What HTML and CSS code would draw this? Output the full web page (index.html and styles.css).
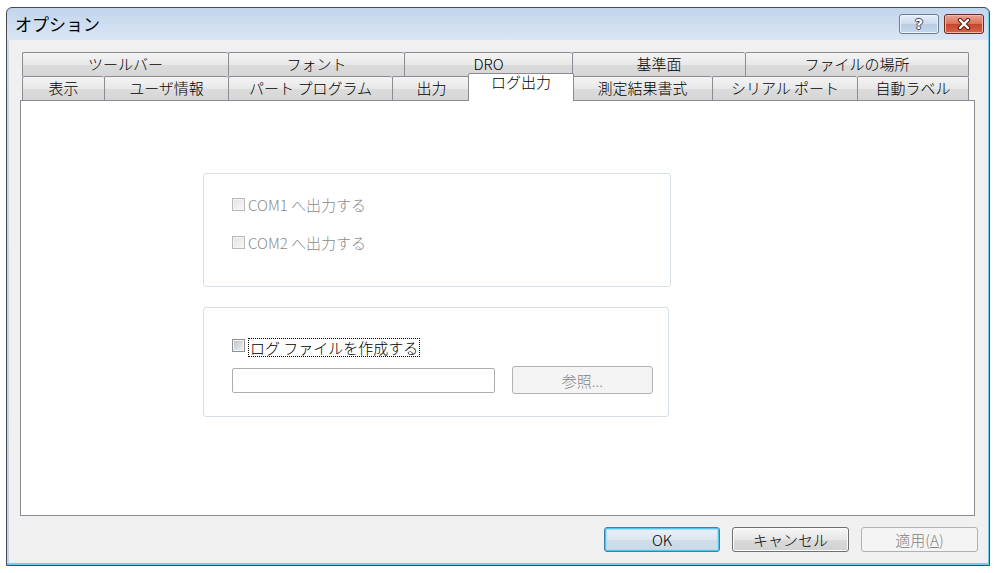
FILE: index.html
```html
<!DOCTYPE html>
<html lang="ja">
  <head>
    <meta charset="UTF-8" />
    <title>オプション</title>
    <link rel="stylesheet" href="styles.css">
  </head>
  <body>
    <div class="window">
      <div class="titlebar">
        <span class="title">オプション</span>
        <div class="caption-buttons">
          <span class="cap-btn help">?</span>
          <span class="cap-btn close">
            <svg width="14" height="12" viewBox="0 0 14 12">
              <path d="M3 2 L11 10 M11 2 L3 10" stroke="#5a1d12" stroke-width="4.4" stroke-linecap="round" fill="none" />
              <path d="M3 2 L11 10 M11 2 L3 10" stroke="#ffffff" stroke-width="2.4" stroke-linecap="round" fill="none" />
            </svg>
          </span>
        </div>
      </div>

      <div class="client">
        <div class="tabctl">
          <div class="tabstrip">
            <div class="tab-row row-top">
              <div class="tab">ツールバー</div>
              <div class="tab">フォント</div>
              <div class="tab">DRO</div>
              <div class="tab">基準面</div>
              <div class="tab">ファイルの場所</div>
            </div>
            <div class="tab-row row-bottom">
              <div class="tab">表示</div>
              <div class="tab">ユーザ情報</div>
              <div class="tab">パート プログラム</div>
              <div class="tab">出力</div>
              <div class="tab selected">ログ出力</div>
              <div class="tab">測定結果書式</div>
              <div class="tab">シリアル ポート</div>
              <div class="tab">自動ラベル</div>
            </div>
          </div>

          <div class="panel">
            <div class="group group-com">
              <div class="check disabled">
                <span class="box"></span>
                <span class="label">COM1 へ出力する</span>
              </div>
              <div class="check disabled">
                <span class="box"></span>
                <span class="label">COM2 へ出力する</span>
              </div>
            </div>

            <div class="group group-log">
              <div class="check">
                <span class="box"></span>
                <span class="label focus">ログ ファイルを作成する</span>
              </div>
              <div class="file-row">
                <span class="textbox"></span>
                <button class="btn disabled browse">参照...</button>
              </div>
            </div>
          </div>
        </div>

        <div class="footer">
          <button class="btn default ok">OK</button>
          <button class="btn">キャンセル</button>
          <button class="btn disabled">適用(<u>A</u>)</button>
        </div>
      </div>
    </div>
  </body>
</html>
```

FILE: styles.css
```css
html,
body {
  margin: 0;
  background: #fff;
}
body {
  font-family: "Noto Sans CJK JP", sans-serif;
  font-weight: 300;
  font-size: 15px;
  color: #000;
}
.window {
  box-sizing: border-box;
  width: 984px;
  height: 559px;
  margin: 7px 0 0 6px;
  padding: 0 1px 2px 2px;
  border: 1px solid #4a4a4a;
  border-radius: 6px 6px 0 0;
  background: linear-gradient(#c2d5ed, #dae6f4 32px, #c6daf0 33px, #bcd6ef);
  box-shadow: inset 0 -2px 0 #6fcdf0, inset -1px 0 0 #6fcdf0;
  display: flex;
  flex-direction: column;
}
.titlebar {
  height: 32px;
  display: flex;
  justify-content: space-between;
  align-items: center;
  padding-left: 6px;
}
.title {
  font-size: 17px;
  font-weight: 400;
  line-height: 20px;
}
.caption-buttons {
  align-self: flex-start;
  display: flex;
  gap: 5px;
  margin: 6px 4px 0 0;
}
.cap-btn {
  box-sizing: border-box;
  width: 40px;
  height: 20px;
  border-radius: 3px;
  display: flex;
  align-items: center;
  justify-content: center;
}
.cap-btn.help {
  border: 1px solid #6a7d96;
  background: linear-gradient(#e6eef8, #cbdaec 50%, #b8cce4 51%, #c4d6ea);
  box-shadow: inset 0 0 0 1px #eef4fb;
  font-family: "DejaVu Sans", sans-serif;
  font-weight: bold;
  font-size: 14px;
  line-height: 18px;
  color: #fff;
  text-shadow: 1px 0 0 #3a4a60, -1px 0 0 #3a4a60, 0 1px 0 #3a4a60, 0 -1px 0 #3a4a60;
}
.cap-btn.close {
  border: 1px solid #6b2a20;
  background: linear-gradient(#e8a595, #d8705a 50%, #c7432b 51%, #d4654b);
  box-shadow: inset 0 0 0 1px #efb9aa;
}
.client {
  flex: 1;
  background: #f0f0f0;
  display: flex;
  flex-direction: column;
}
.tabctl {
  width: 955px;
  margin: 12px 0 0 11px;
}
.tabstrip {
  padding-left: 2px;
}
.tab-row {
  display: grid;
  height: 24px;
}
.row-top {
  grid-template-columns: 206px 176px 168px 173px 224px;
}
.row-bottom {
  grid-template-columns: 82px 124px 164px 78px 102px 140px 145px 112px;
}
.tab {
  border: 1px solid #898c95;
  border-right: none;
  border-bottom: none;
  border-radius: 2px 2px 0 0;
  background: linear-gradient(#f4f4f4, #e8e8e8 50%, #dcdcdc 51%, #d6d6d6);
  text-align: center;
  line-height: 22px;
  white-space: nowrap;
}
.tab:last-child {
  border-right: 1px solid #898c95;
}
.tab.selected {
  position: relative;
  z-index: 1;
  margin: -3px -2px -1px -2px;
  border-right: 1px solid #898c95;
  background: #fff;
  line-height: 15px;
}
.panel {
  box-sizing: border-box;
  height: 416px;
  padding: 72px 0 0 182px;
  border: 1px solid #898c95;
  background: #fff;
}
.group {
  box-sizing: border-box;
  border: 1px solid #d5dfe5;
  border-radius: 3px;
}
.group-com {
  width: 468px;
  height: 114px;
  padding: 24px 0 0 28px;
}
.group-log {
  width: 466px;
  height: 110px;
  margin-top: 20px;
  padding: 31px 0 0 28px;
}
.check {
  display: flex;
  align-items: center;
  gap: 3px;
  height: 13px;
}
.check + .check {
  margin-top: 25px;
}
.box {
  box-sizing: border-box;
  width: 13px;
  height: 13px;
  padding: 1px;
  border: 1px solid #8e8f8f;
  background: #f4f4f4;
  flex-shrink: 0;
}
.box::after {
  content: "";
  display: block;
  width: 9px;
  height: 9px;
  background: linear-gradient(135deg, #bfc4cb, #eef0f2);
}
.check.disabled .box {
  border-color: #b9b9b9;
}
.check.disabled .box::after {
  background: linear-gradient(135deg, #e4e4e4, #f6f6f6);
}
.label {
  line-height: 17px;
  white-space: nowrap;
}
.check.disabled .label {
  color: #8a8a8a;
}
.label.focus {
  margin-top: 4px;
  padding: 0 1px;
  border: 1px dotted #000;
}
.file-row {
  display: flex;
  align-items: center;
  gap: 17px;
  margin-top: 14px;
}
.textbox {
  box-sizing: border-box;
  width: 263px;
  height: 25px;
  border: 1px solid #abadb3;
  border-radius: 2px;
  background: #fff;
}
.footer {
  display: flex;
  justify-content: flex-end;
  gap: 12px;
  margin-top: 11px;
  padding-right: 10px;
}
.btn {
  box-sizing: border-box;
  width: 117px;
  height: 25px;
  padding: 0;
  border: 1px solid #707070;
  border-radius: 3px;
  background: linear-gradient(#f6f6f6, #e6e6e6 50%, #dadada 51%, #d2d2d2);
  box-shadow: inset 0 0 0 1px #fbfbfb;
  font-family: inherit;
  font-weight: inherit;
  font-size: 15px;
  line-height: 21px;
  color: #000;
}
.btn.ok {
  width: 116px;
}
.btn.default {
  border-color: #3c7fb1;
  background: linear-gradient(#eaf1f8, #dce7f1 50%, #cfdde9 51%, #cbdae7);
  box-shadow: inset 0 0 0 1px #54c3ee, inset 0 0 0 2px #a9def4;
}
.btn.disabled {
  border-color: #adb2b5;
  background: #f4f4f4;
  box-shadow: none;
  color: #838383;
}
.btn.browse {
  width: 141px;
  height: 28px;
}
```
